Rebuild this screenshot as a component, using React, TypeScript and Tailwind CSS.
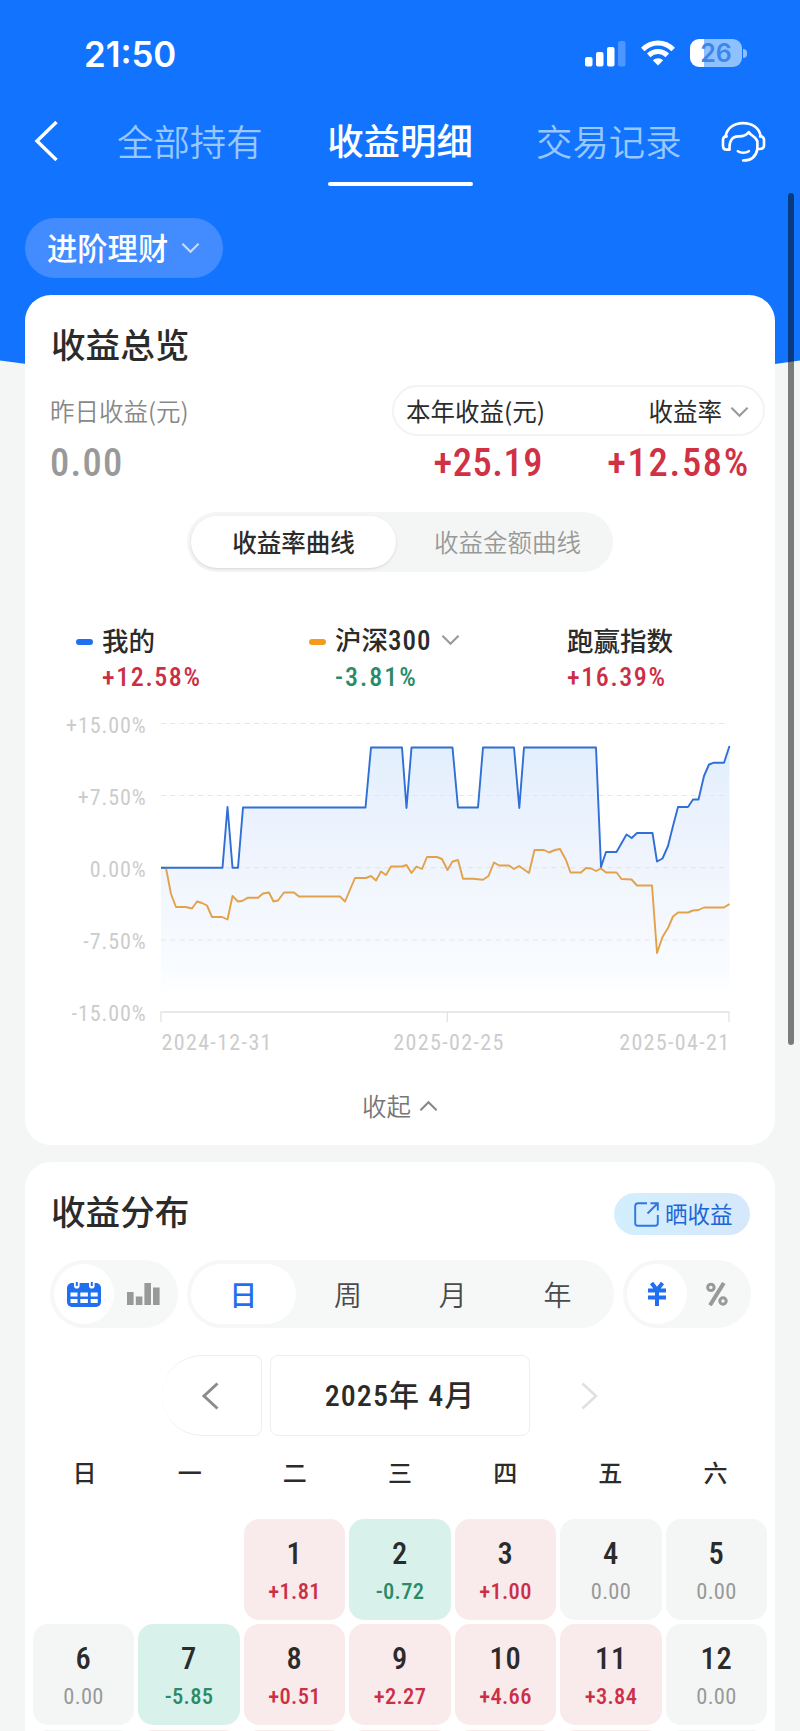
import React from 'react';

type Tone = 'up' | 'down' | 'flat' | 'empty';

interface DayCell {
    day?: number;
    value?: string;
    tone: Tone;
}

const toneBg: Record<Tone, string> = {
    up: 'bg-[#f9eaeb]',
    down: 'bg-[#d8f2eb]',
    flat: 'bg-[#f4f6f6]',
    empty: ''
};

const toneText: Record<Tone, string> = {
    up: 'text-[#cb2f46] font-medium',
    down: 'text-[#2b8a68] font-medium',
    flat: 'text-[#999999]',
    empty: ''
};

const days: DayCell[] = [
    { tone: 'empty' },
    { tone: 'empty' },
    { day: 1, value: '+1.81', tone: 'up' },
    { day: 2, value: '-0.72', tone: 'down' },
    { day: 3, value: '+1.00', tone: 'up' },
    { day: 4, value: '0.00', tone: 'flat' },
    { day: 5, value: '0.00', tone: 'flat' },
    { day: 6, value: '0.00', tone: 'flat' },
    { day: 7, value: '-5.85', tone: 'down' },
    { day: 8, value: '+0.51', tone: 'up' },
    { day: 9, value: '+2.27', tone: 'up' },
    { day: 10, value: '+4.66', tone: 'up' },
    { day: 11, value: '+3.84', tone: 'up' },
    { day: 12, value: '0.00', tone: 'flat' },
    { tone: 'flat' },
    { tone: 'up' },
    { tone: 'up' },
    { tone: 'up' },
    { tone: 'up' },
    { tone: 'up' },
    { tone: 'flat' }
];

const weekdays = ['日', '一', '二', '三', '四', '五', '六'];

const minePoints =
    '161,867.7 222.5,867.7 227.5,807 232.5,867.7 238,867.7 243,807.5 365.5,807.5 371,747.5 402,747.5 406.5,808 411.5,747.5 452.5,747.5 458,807.5 478,807.5 483,747.5 514,747.5 519.3,808 524,747.5 596,747.5 601,867 606,852 616.5,852 626.5,834.5 631.7,838 637,833 652.5,833 657,861.5 662.5,858.5 668,846 673,826 678,807 688,807 693,799.5 698.5,799.5 704,776 709,764.5 714,762.7 724,762.7 729.5,746';

const indexPoints =
    '161,867.7 166,868 171,894 176,907 186,907 192,908.5 197,901.5 202,903 207,905.5 212,917 222,917 227.5,919.5 232.5,896 238,901.5 242,901 248,897.7 258,897.7 263,893.5 269,892.5 273.5,901.5 278,900.5 284,892.5 294,892.5 299,896.5 340,896.5 345,901.5 355,878 366,878 371,876 376,880.5 381,871.5 386,875 391,866.5 402,866.5 406.5,865 411.5,873 416.5,866.5 422,869 427,857 437,857 442,859 447.5,870 452.5,861.5 458,860 463,878.7 473,878.7 483,879.7 488.5,876 494,862.5 499,865.5 509,865.5 514,869 519,866 529,873 534.5,850 544,850 549,852.5 555,850 560,849 566,860 570.5,872.5 581,872.5 586,868 591,868.5 596,871 601,868.5 606,872.5 616.5,872.5 621.5,879 631.5,879.5 637,885.5 652,885.5 657,953 662.5,937 668,928 673,916.5 678,912.5 688,912.5 693,910.5 698.5,910 704,907.5 724,907.5 729.5,904';

const yTicks = [
    { label: '+15.00%', y: 723.5 },
    { label: '+7.50%', y: 795.5 },
    { label: '0.00%', y: 867.7 },
    { label: '-7.50%', y: 940 },
    { label: '-15.00%', y: 1012 }
];

const Chevron: React.FC<{ className?: string; up?: boolean }> = ({ className, up }) => (
    <svg viewBox="0 0 20 12" className={className} fill="none" stroke="currentColor" strokeWidth="2.2">
        <path d={up ? 'M1.5 10.5L10 2L18.5 10.5' : 'M1.5 1.5L10 10L18.5 1.5'} />
    </svg>
);

const StatusBar: React.FC = () => (
    <div className="h-[106px] pt-[36px] pl-[84px] pr-[53px] flex justify-between items-start text-white">
        <span className="font-[Inter] font-semibold text-[34.8px] leading-[36px]">21:50</span>
        <div className="flex items-center mt-[3px]">
            <svg viewBox="0 0 41 27" className="w-[41px] h-[27px]" fill="currentColor">
                <rect x="0" y="17" width="7.5" height="9.5" rx="2" />
                <rect x="11" y="12" width="7.5" height="14.5" rx="2" />
                <rect x="22" y="7" width="7.5" height="19.5" rx="2" />
                <rect x="33" y="1" width="7.5" height="25.5" rx="2" opacity="0.25" />
            </svg>
            <svg viewBox="0 0 34 26" className="w-[34px] h-[26px] ml-[15px]" fill="none" stroke="currentColor" strokeWidth="5">
                <path d="M1.8 9.5C10.5 .8 23.5 .8 32.2 9.5" />
                <path d="M7.7 15.4C13 10.3 21 10.3 26.3 15.4" />
                <path d="M17 25.5L11.8 20.3C14.8 17.6 19.2 17.6 22.2 20.3Z" fill="currentColor" stroke="none" />
            </svg>
            <div className="ml-[15px] w-[52px] h-[28px] rounded-[9px] bg-linear-to-r from-white from-27% to-[#8fc0ff] to-27% flex items-center justify-center">
                <span className="font-[Inter] font-semibold text-[25px] leading-[28px] text-[#3c86ea]">26</span>
            </div>
            <div className="ml-[1px] w-[4px] h-[9px] rounded-r-full bg-[#8fc0ff]" />
        </div>
    </div>
);

const HeadsetIcon: React.FC = () => (
    <svg viewBox="0 0 136 126" className="w-[45px] h-[42px]" fill="none" stroke="currentColor" strokeWidth="8" strokeLinecap="round" strokeLinejoin="round">
        <path d="M14 44C20 20 40 6 67 6S114 20 120 44" />
        <path d="M24 86H17C9 86 6 82 6 75V58C6 50 9 46 17 46" />
        <path d="M110 84H117C126 84 130 80 130 73V58C130 50 126 46 118 46" />
        <path d="M26 86C24 60 34 46 52 46C66 47 75 44 84 33C90 45 108 47 110 62V84" />
        <path d="M110 84C106 106 92 119 67 119" />
        <path d="M51 91C60 97 75 97 84 91" />
    </svg>
);

const NavTabs: React.FC = () => (
    <div className="h-[80px] flex items-start text-white">
        <svg viewBox="0 0 24 42" className="w-[24px] h-[42px] ml-[34px] mt-[14px]" fill="none" stroke="currentColor" strokeWidth="3.4">
            <path d="M22.5 2L3 21L22.5 40" />
        </svg>
        <span className="ml-[59px] w-[146px] mt-[9px] text-[36.4px] leading-[50px] whitespace-nowrap font-[350] text-[#98c8ff]">全部持有</span>
        <div className="ml-[64px] w-[146px] flex flex-col items-center">
            <span className="mt-[8px] text-[36.4px] leading-[50px] whitespace-nowrap font-medium">收益明细</span>
            <span className="mt-[18px] w-[145px] h-[4px] rounded-full bg-white" />
        </div>
        <span className="ml-[63px] w-[146px] mt-[9px] text-[36.4px] leading-[50px] whitespace-nowrap font-[350] text-[#98c8ff]">交易记录</span>
        <div className="ml-[39px] mt-[15px]">
            <HeadsetIcon />
        </div>
    </div>
);

const YieldChart: React.FC = () => (
    <svg viewBox="25 700 750 370" className="w-[750px] h-[370px] block font-[Roboto] font-stretch-semi-condensed">
        <defs>
            <linearGradient id="area" x1="0" y1="746" x2="0" y2="995" gradientUnits="userSpaceOnUse">
                <stop offset="0" stopColor="#e3effd" />
                <stop offset="0.45" stopColor="#eff4fd" />
                <stop offset="0.9" stopColor="#f9fcff" />
                <stop offset="1" stopColor="#ffffff" />
            </linearGradient>
        </defs>
        <polygon points={`161,995 ${minePoints} 729.5,995`} fill="url(#area)" />
        {yTicks.map(tick => (
            <g key={tick.label}>
                <text x="146.5" y={tick.y + 9} textAnchor="end" fontSize="22" fill="#cccccc" letterSpacing="0.9">
                    {tick.label}
                </text>
                {tick.y < 1000 && (
                    <line x1="161" x2="726" y1={tick.y} y2={tick.y} stroke="#e3e6ea" strokeWidth="1.2" strokeDasharray="5 4.3" />
                )}
            </g>
        ))}
        <path d="M161 1022V1012H729V1022M447.3 1012V1022" fill="none" stroke="#e2e2e2" strokeWidth="1.3" />
        <polyline points={indexPoints} fill="none" stroke="#e3a14a" strokeWidth="1.9" strokeLinejoin="round" />
        <polyline points={minePoints} fill="none" stroke="#2f6fd6" strokeWidth="1.9" strokeLinejoin="round" />
        <g fontSize="22" fill="#cccccc" letterSpacing="1.35">
            <text x="161.5" y="1050">2024-12-31</text>
            <text x="449" y="1050" textAnchor="middle">2025-02-25</text>
            <text x="730.5" y="1050" textAnchor="end">2025-04-21</text>
        </g>
    </svg>
);

const Overview: React.FC = () => (
    <section className="mx-[25px] h-[850px] rounded-[26px] bg-white flex flex-col">
        <h2 className="mt-[23px] ml-[26px] text-[34.6px] leading-[50px] font-medium">收益总览</h2>
        <div className="mt-[17px] pl-[25px] pr-[10px] flex justify-between items-center h-[51px] text-[24.5px]">
            <span className="pt-[2px] font-[350] text-[#888888]">昨日收益(元)</span>
            <div className="w-[373px] h-[51px] rounded-full border-2 border-[#f3f3f3] pl-[12px] pr-[14px] pt-[2px] flex items-center justify-between">
                <span>本年收益(元)</span>
                <span className="flex items-center gap-[8px]">
                    收益率
                    <Chevron className="w-[19px] h-[12px] text-[#999999]" />
                </span>
            </div>
        </div>
        <div className="mt-[4px] h-[46px] pl-[25px] pr-[25px] flex items-center font-[Roboto] font-stretch-semi-condensed font-medium text-[38.5px] text-[#d13144]">
            <span className="tracking-[1.3px] text-[#999999]">0.00</span>
            <span className="ml-auto tracking-[0.5px]">+25.19</span>
            <span className="w-[207px] text-right tracking-[1.7px]">+12.58%</span>
        </div>
        <div className="mt-[26px] ml-[162px] w-[426px] h-[60px] rounded-full bg-[#f4f6f6] p-[4px] flex items-center text-[24.5px]">
            <div className="w-[205px] h-[52px] rounded-full bg-white shadow-sm flex items-center justify-center font-medium">收益率曲线</div>
            <div className="flex-1 text-center pr-[2px] pl-[12px] font-[350] text-[#999999]">收益金额曲线</div>
        </div>
        <div className="mt-[49px] h-[78px] pl-[51px] flex text-[26.5px] font-medium">
            <div className="w-[233px]">
                <div className="flex items-center h-[38px]">
                    <span className="w-[17px] h-[6px] mt-[4px] rounded-full bg-[#1f6ff0] mr-[9px]" />
                    我的
                </div>
                <div className="ml-[26px] h-[36px] leading-[36px] text-[26px] font-[Roboto] font-stretch-semi-condensed tracking-[1.6px] text-[#cb2f46]">+12.58%</div>
            </div>
            <div className="w-[232px]">
                <div className="flex items-center h-[38px]">
                    <span className="w-[17px] h-[6px] mt-[4px] rounded-full bg-[#f39a1f] mr-[9px]" />
                    <span>
                        沪深<span className="font-[Roboto] font-stretch-semi-condensed tracking-[1px] text-[27px]">300</span>
                    </span>
                    <Chevron className="ml-[9px] w-[19px] h-[12px] text-[#999999]" />
                </div>
                <div className="ml-[26px] h-[36px] leading-[36px] text-[26px] font-[Roboto] font-stretch-semi-condensed tracking-[2px] text-[#2b8a68]">-3.81%</div>
            </div>
            <div className="ml-[26px]">
                <div className="flex items-center h-[38px]">跑赢指数</div>
                <div className="h-[36px] leading-[36px] text-[26px] font-[Roboto] font-stretch-semi-condensed tracking-[1.6px] text-[#cb2f46]">+16.39%</div>
            </div>
        </div>
        <div className="mt-[1px]">
            <YieldChart />
        </div>
        <div className="mt-[18px] h-[36px] flex items-center justify-center gap-[8px] text-[24.5px] font-[350] text-[#777777]">
            收起
            <Chevron up className="w-[19px] h-[12px] text-[#888888]" />
        </div>
    </section>
);

const CalendarIcon: React.FC = () => (
    <svg viewBox="0 0 34 25" className="w-[34px] h-[25px]">
        <rect x="0" y="1" width="34" height="24" rx="5" fill="#1f6ff0" />
        <g fill="#ffffff">
            <rect x="7" y="-2" width="5.6" height="8.5" rx="2.8" />
            <rect x="22" y="-2" width="5.6" height="8.5" rx="2.8" />
            <rect x="3.5" y="10.5" width="7" height="4" />
            <rect x="13.3" y="10.5" width="7.6" height="4" />
            <rect x="23.7" y="10.5" width="7" height="4" />
            <rect x="3.5" y="17" width="7" height="4" />
            <rect x="13.3" y="17" width="7.6" height="4" />
            <rect x="23.7" y="17" width="7" height="4" />
        </g>
        <path d="M9.8 0V4M24.8 0V4" stroke="#1f6ff0" strokeWidth="2" />
    </svg>
);

const BarsIcon: React.FC = () => (
    <svg viewBox="0 0 33 22" className="w-[33px] h-[22px]" fill="#999999">
        <rect x="0" y="9" width="6.6" height="13" />
        <rect x="8.8" y="13.5" width="6.6" height="8.5" />
        <rect x="17.4" y="0" width="6.6" height="22" />
        <rect x="26" y="4.5" width="6.6" height="17.5" />
    </svg>
);

const YuanIcon: React.FC = () => (
    <svg viewBox="0 0 18 24" className="w-[18px] h-[24px]" fill="none" stroke="#1f6ff0" strokeWidth="4">
        <path d="M3.5 1L9 8L14.5 1M0 8.5H18M0 15.5H18M9 7V24" />
    </svg>
);

const PercentIcon: React.FC = () => (
    <svg viewBox="0 0 22 24" className="w-[22px] h-[24px]" fill="none" stroke="#999999">
        <circle cx="4.9" cy="5.4" r="3.2" strokeWidth="3" />
        <circle cx="17" cy="19" r="3.2" strokeWidth="3" />
        <path d="M17.8 1L4 23.3" strokeWidth="4" />
    </svg>
);

const ShareIcon: React.FC = () => (
    <svg viewBox="0 0 25 25" className="w-[25px] h-[25px]" fill="none" stroke="#2f76e0" strokeWidth="1.9">
        <path d="M13 1.2H4Q1.2 1.2 1.2 4V21Q1.2 23.8 4 23.8H21Q23.8 23.8 23.8 21V13" />
        <path d="M16.5 1.2H23.8V8.5M23.5 1.5L13.5 11.5" />
    </svg>
);

const Distribution: React.FC = () => (
    <section className="mt-[17px] mx-[25px] rounded-t-[26px] bg-white pt-[23px]">
        <div className="h-[50px] pl-[26px] pr-[25px] flex items-center justify-between">
            <h2 className="text-[34.6px] leading-[50px] font-medium">收益分布</h2>
            <div className="w-[136px] h-[42px] mt-[8px] rounded-full bg-linear-to-r from-[#d2effe] to-[#d6e8fb] flex items-center pl-[20px] gap-[6px] text-[22.5px] text-[#2065d6]">
                <ShareIcon />
                晒收益
            </div>
        </div>
        <div className="mt-[25px] h-[68px] pl-[25px] flex">
            <div className="w-[128px] rounded-full bg-[#f6f7f7] p-[4px] flex items-center">
                <div className="w-[60px] h-[60px] rounded-full bg-white flex items-center justify-center">
                    <CalendarIcon />
                </div>
                <div className="ml-[13px]">
                    <BarsIcon />
                </div>
            </div>
            <div className="ml-[9px] w-[427px] rounded-full bg-[#f6f7f7] p-[4px] grid grid-cols-4 items-center text-center text-[28px] font-[350] text-[#4a4a4a]">
                <div className="h-[60px] leading-[60px] rounded-full bg-white text-[#1f6ff0] font-medium">日</div>
                <div>周</div>
                <div>月</div>
                <div>年</div>
            </div>
            <div className="ml-[9px] w-[128px] rounded-full bg-[#f6f7f7] p-[4px] flex items-center">
                <div className="w-[60px] h-[60px] rounded-full bg-white flex items-center justify-center">
                    <YuanIcon />
                </div>
                <div className="ml-[19px]">
                    <PercentIcon />
                </div>
            </div>
        </div>
        <div className="mt-[27px] h-[81px] pl-[137px] flex">
            <div className="w-[100px] rounded-l-[40px] rounded-r-[8px] border border-l-0 border-[#eeeeee] pl-[39px] flex items-center">
                <svg viewBox="0 0 18 28" className="w-[18px] h-[28px]" fill="none" stroke="#8c8c8c" strokeWidth="3">
                    <path d="M16.5 1.5L3 14L16.5 26.5" />
                </svg>
            </div>
            <div className="ml-[8px] w-[260px] rounded-[8px] border border-[#eeeeee] flex items-center justify-center font-[Roboto,'Noto_Sans_CJK_SC'] font-stretch-semi-condensed font-medium text-[30px] tracking-[1.1px] whitespace-pre">
                2025年 4月
            </div>
            <div className="ml-[51px] flex items-center">
                <svg viewBox="0 0 18 28" className="w-[18px] h-[28px]" fill="none" stroke="#e0e0e0" strokeWidth="2.6">
                    <path d="M1.5 1.5L15 14L1.5 26.5" />
                </svg>
            </div>
        </div>
        <div className="mt-[17px] h-[38px] px-[9px] grid grid-cols-7 gap-[4px] items-center text-center text-[24px] font-medium">
            {weekdays.map(name => (
                <div key={name}>{name}</div>
            ))}
        </div>
        <div className="mt-[28px] px-[8px] grid grid-cols-7 gap-[4.4px] font-[Roboto] font-stretch-semi-condensed">
            {days.map((cell, i) => (
                <div key={i} className={`h-[101px] rounded-[15px] pt-[17px] flex flex-col items-center ${toneBg[cell.tone]}`}>
                    <span className="text-[30.5px] leading-[36px] font-medium tracking-[0.8px]">{cell.day}</span>
                    <span className={`mt-[4px] text-[22.5px] leading-[30px] tracking-[0.3px] ${toneText[cell.tone]}`}>{cell.value}</span>
                </div>
            ))}
        </div>
    </section>
);

const App: React.FC = () => {
    return (
        <div className="relative isolate w-[800px] h-[1731px] overflow-hidden bg-[#f4f6f6] text-[#2b2b2b] font-['Noto_Sans_CJK_SC',sans-serif]">
            {/* blue backdrop with a slightly bulging lower edge */}
            <svg viewBox="0 0 800 400" className="absolute left-0 top-0 -z-10 w-[800px] h-[400px]">
                <path d="M0 0H800V360.5Q400 418 0 360.5Z" fill="#1273ff" />
            </svg>
            <StatusBar />
            <NavTabs />
            <div className="mt-[32px] ml-[24.5px] w-[198px] h-[60px] rounded-full bg-[#438cff] flex items-center pl-[22.5px] text-[30.3px] text-white font-medium">
                进阶理财
                <Chevron className="ml-[13px] w-[19px] h-[12px] text-[#c4dcff]" />
            </div>
            <div className="mt-[17px]">
                <Overview />
                <Distribution />
            </div>
            <div className="absolute left-[788px] top-[193px] w-[6px] h-[852px] rounded-full bg-black/50" />
        </div>
    );
};

export default App;
